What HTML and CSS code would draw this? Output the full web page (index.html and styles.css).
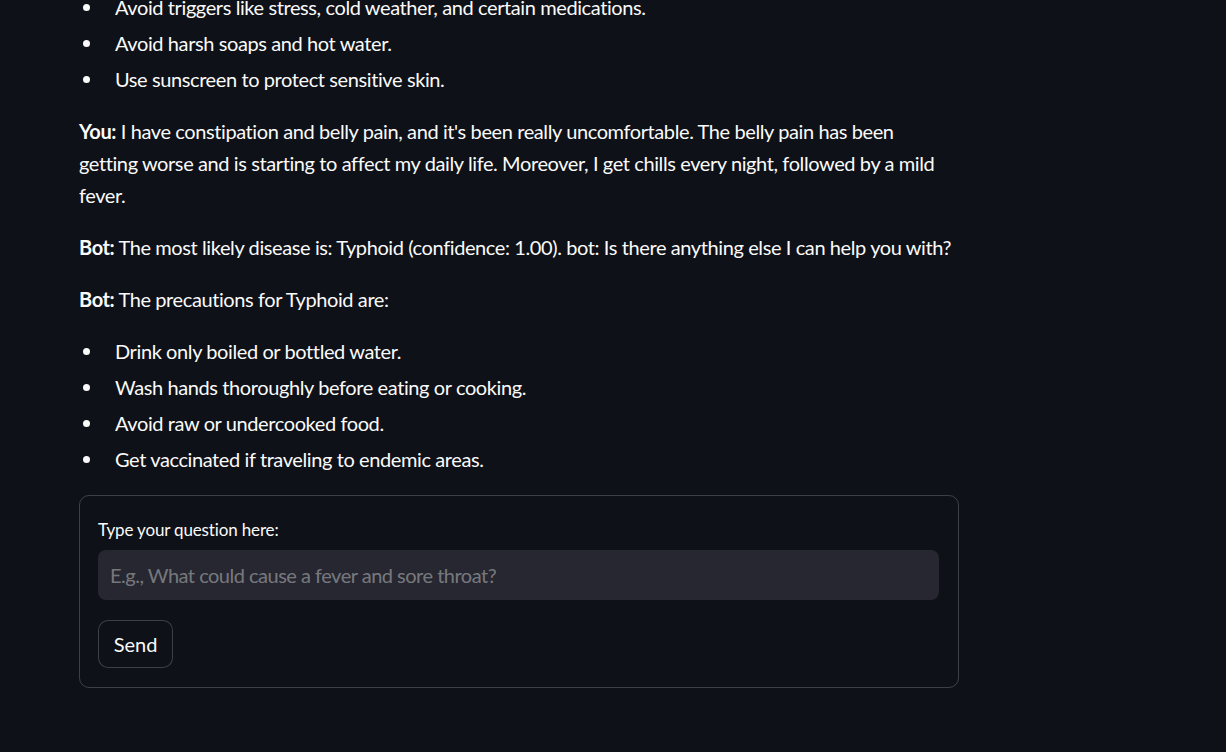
FILE: index.html
```html
<!DOCTYPE html>
<html lang="en">
<head>
<meta charset="utf-8">
<title>Chat</title>
<link rel="stylesheet" href="styles.css">
</head>
<body>
<main class="main">
  <ul class="list">
    <li>Avoid triggers like stress, cold weather, and certain medications.</li>
    <li>Avoid harsh soaps and hot water.</li>
    <li>Use sunscreen to protect sensitive skin.</li>
  </ul>
  <p class="msg"><strong>You:</strong> I have constipation and belly pain, and it's been really uncomfortable. The belly pain has been<br>getting worse and is starting to affect my daily life. Moreover, I get chills every night, followed by a mild<br>fever.</p>
  <p class="msg"><strong>Bot:</strong> The most likely disease is: Typhoid (confidence: 1.00). bot: Is there anything else I can help you with?</p>
  <p class="msg"><strong>Bot:</strong> The precautions for Typhoid are:</p>
  <ul class="list">
    <li>Drink only boiled or bottled water.</li>
    <li>Wash hands thoroughly before eating or cooking.</li>
    <li>Avoid raw or undercooked food.</li>
    <li>Get vaccinated if traveling to endemic areas.</li>
  </ul>
  <form class="form">
    <label class="label" for="q">Type your question here:</label>
    <input class="input" id="q" type="text" placeholder="E.g., What could cause a fever and sore throat?">
    <div class="actions"><button class="btn" type="button">Send</button></div>
  </form>
</main>
</body>
</html>
```

FILE: styles.css
```css
html, body {
  margin: 0;
  padding: 0;
  background: #0e1117;
  color: #fafafa;
  font-family: "Lato", "Noto Sans", sans-serif;
  font-size: 20px;
  line-height: 32px;
  overflow: hidden;
  height: 752px;
}

.main {
  width: 880px;
  margin: -9px 0 0 79px;
  letter-spacing: -0.4px;
}

.msg {
  margin: 0 0 20px;
}

.msg strong {
  font-weight: 700;
}

.list {
  list-style: none;
  margin: 0 0 20px;
  padding: 0;
}

.list li {
  display: flex;
  align-items: flex-start;
}

.list li + li {
  margin-top: 4px;
}

.list li::before {
  content: "";
  flex: none;
  width: 7px;
  height: 7px;
  border-radius: 50%;
  background: #fafafa;
  margin: 12.5px 25px 0 4px;
}

.form {
  border: 1px solid rgba(250, 250, 250, 0.2);
  border-radius: 10px;
  padding: 19px 19px 19px 18px;
  display: flex;
  flex-direction: column;
}

.label {
  display: flex;
  align-items: center;
  height: 30px;
  margin-bottom: 5px;
  font-size: 17px;
  letter-spacing: -0.15px;
}

.input {
  height: 50px;
  box-sizing: border-box;
  border: none;
  outline: none;
  border-radius: 8px;
  background: #262730;
  color: #fafafa;
  font-family: inherit;
  font-size: 20px;
  letter-spacing: -0.5px;
  padding: 0 12px;
}

.input::placeholder {
  color: rgba(250, 250, 250, 0.4);
}

.actions {
  display: flex;
  margin-top: 20px;
}

.btn {
  height: 48px;
  width: 75px;
  box-sizing: border-box;
  border: 1px solid rgba(250, 250, 250, 0.2);
  border-radius: 10px;
  background: #0e1117;
  color: #fafafa;
  font-family: inherit;
  font-size: 20px;
  letter-spacing: 0;
  padding: 0;
}
```
